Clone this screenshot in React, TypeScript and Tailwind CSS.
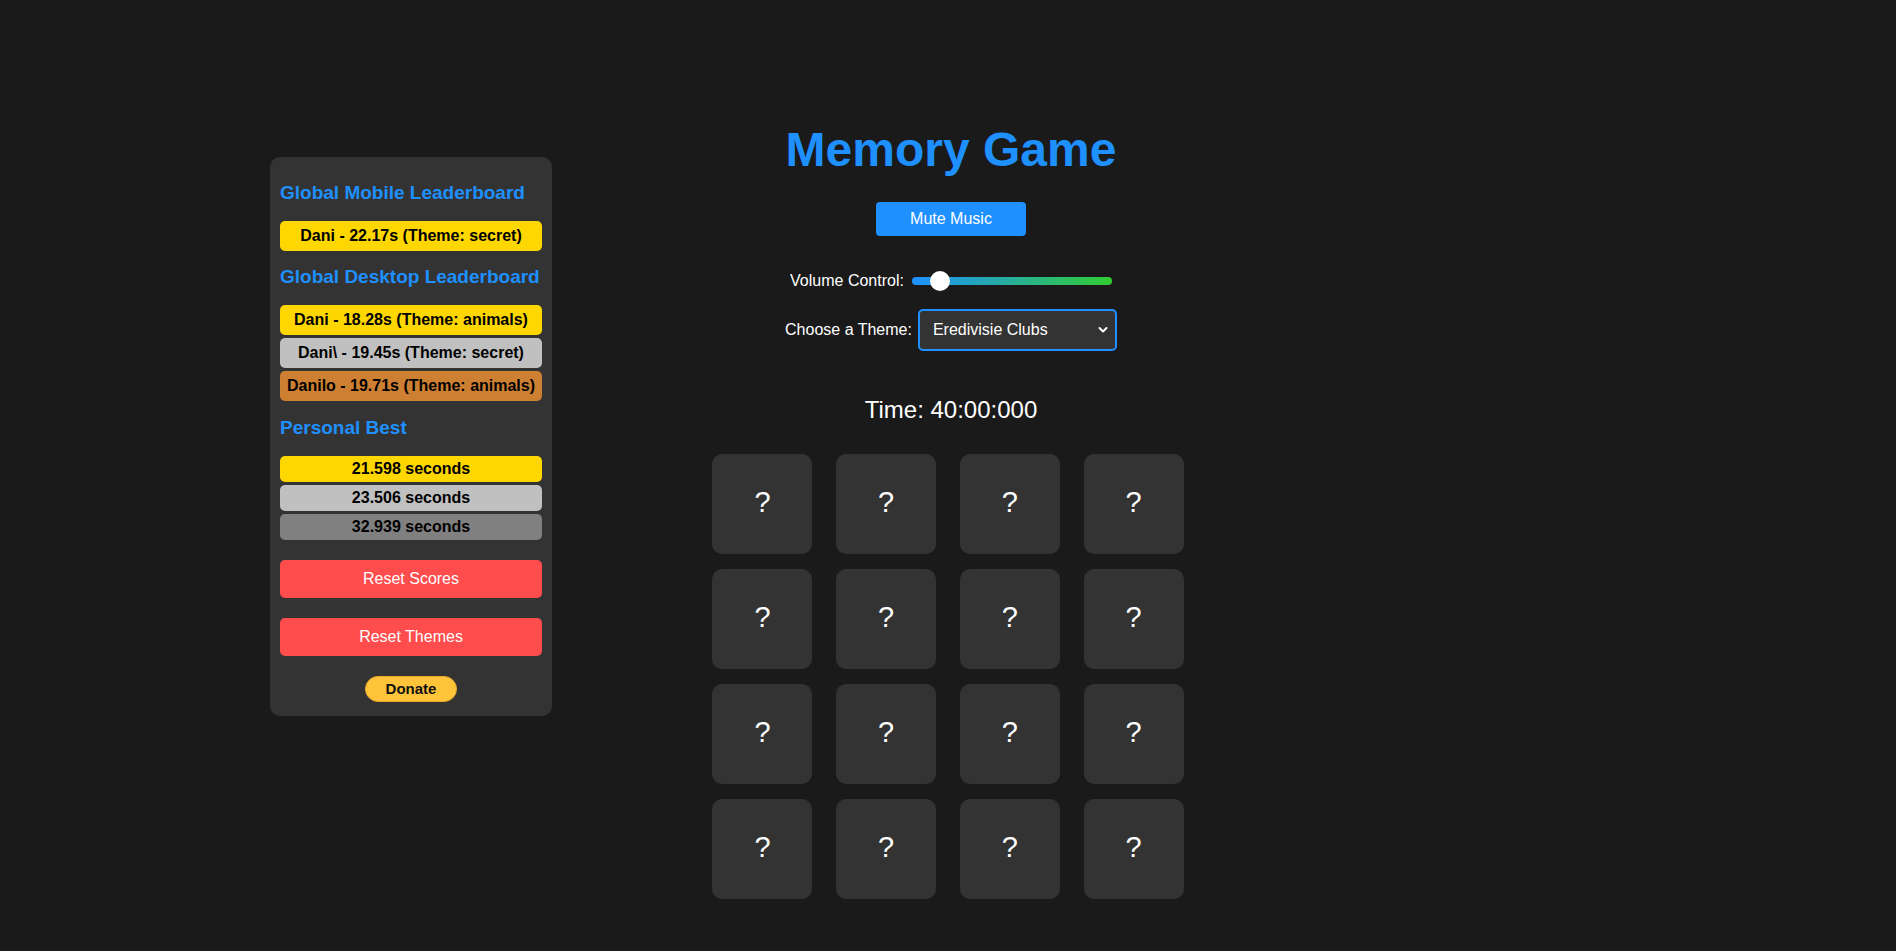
import React from 'react';

const mobileBoard = [{ name: 'Dani', time: '22.17', theme: 'secret' }];

const desktopBoard = [
  { name: 'Dani', time: '18.28', theme: 'animals' },
  { name: 'Dani\\', time: '19.45', theme: 'secret' },
  { name: 'Danilo', time: '19.71', theme: 'animals' }
];

const personalBest = ['21.598', '23.506', '32.939'];

const medal = ['bg-[#ffd700]', 'bg-[#c0c0c0]', 'bg-[#cd7f32]'];
const pbColors = ['bg-[#ffd700]', 'bg-[#c0c0c0]', 'bg-[#808080]'];

function Heading({ children }: { children: React.ReactNode }) {
  return (
    <h3 className="mt-[15px] mb-[17px] whitespace-nowrap text-[19px] font-bold leading-[22px] text-[#1e90ff]">
      {children}
    </h3>
  );
}

function Sidebar() {
  return (
    <aside className="mt-[157px] w-[282px] rounded-[10px] bg-[#333333] px-[10px] pt-[10px] pb-[14px]">
      <Heading>Global Mobile Leaderboard</Heading>
      <div className="flex flex-col gap-[3px]">
        {mobileBoard.map((e, i) => (
          <div
            key={i}
            className={`${medal[i]} rounded-[5px] py-[6px] text-center text-[16px] font-bold leading-[18px] text-black`}
          >
            {e.name} - {e.time}s (Theme: {e.theme})
          </div>
        ))}
      </div>

      <Heading>Global Desktop Leaderboard</Heading>
      <div className="flex flex-col gap-[3px]">
        {desktopBoard.map((e, i) => (
          <div
            key={i}
            className={`${medal[i]} rounded-[5px] py-[6px] text-center text-[16px] font-bold leading-[18px] text-black`}
          >
            {e.name} - {e.time}s (Theme: {e.theme})
          </div>
        ))}
      </div>

      <div className="pt-[1px]">
        <Heading>Personal Best</Heading>
      </div>
      <div className="flex flex-col gap-[3px]">
        {personalBest.map((t, i) => (
          <div
            key={t}
            className={`${pbColors[i]} rounded-[5px] py-[4px] text-center text-[16px] font-bold leading-[18px] text-black`}
          >
            {t} seconds
          </div>
        ))}
      </div>

      <button className="mt-[20px] h-[38px] w-full rounded-[5px] bg-[#ff4c4c] text-[16px] text-white">
        Reset Scores
      </button>
      <button className="mt-[20px] h-[38px] w-full rounded-[5px] bg-[#ff4c4c] text-[16px] text-white">
        Reset Themes
      </button>

      <div className="mt-[20px] flex justify-center">
        <button className="flex h-[26px] w-[92px] items-center justify-center rounded-full border border-[#e8a92a] bg-[#ffc439] text-[15px] font-bold text-[#111111]">
          Donate
        </button>
      </div>
    </aside>
  );
}

function Card() {
  return (
    <div className="flex h-[100px] w-[100px] items-center justify-center rounded-[10px] bg-[#333333] pb-[2px] text-[29px] text-white">
      ?
    </div>
  );
}

export default function App() {
  return (
    <div
      className="grid min-h-screen grid-cols-[1fr_500px_1fr] items-start bg-[#1a1a1a] text-white"
      style={{ fontFamily: '"Liberation Sans", Arial, sans-serif' }}
    >
      <div className="pl-[270px]">
        <Sidebar />
      </div>

      <main className="flex flex-col items-center pt-[122px] pl-[6px]">
        <h1 className="text-[48px] font-bold leading-[55px] text-[#1e90ff]">Memory Game</h1>

        <button className="mt-[25px] h-[34px] w-[150px] rounded-[4px] bg-[#1e90ff] text-[16px] text-white">
          Mute Music
        </button>

        <div className="mt-[33px] flex h-[24px] items-center gap-[8px] text-[16px]">
          <label>Volume Control:</label>
          <input
            type="range"
            min={0}
            max={1}
            step={0.01}
            defaultValue={0.1}
            className="h-[8px] w-[200px] cursor-pointer appearance-none rounded-full bg-[linear-gradient(to_right,#1e90ff,#32cd32)] outline-none [&::-webkit-slider-thumb]:h-[20px] [&::-webkit-slider-thumb]:w-[20px] [&::-webkit-slider-thumb]:appearance-none [&::-webkit-slider-thumb]:rounded-full [&::-webkit-slider-thumb]:bg-white"
          />
        </div>

        <div className="mt-[16px] flex items-center gap-[6px] text-[16px]">
          <label>Choose a Theme:</label>
          <div className="relative">
            <select
              defaultValue="eredivisie"
              className="h-[42px] w-[199px] appearance-none rounded-[5px] border-2 border-[#1e90ff] bg-[#333333] pl-[13px] text-[16px] text-white outline-none"
            >
              <option value="animals">Animals</option>
              <option value="eredivisie">Eredivisie Clubs</option>
              <option value="secret">Secret</option>
            </select>
            <svg
              className="pointer-events-none absolute top-[17px] right-[9px]"
              width="10"
              height="8"
              viewBox="0 0 10 8"
              fill="none"
            >
              <path d="M1.5 2 L5 5.5 L8.5 2" stroke="white" strokeWidth="2" strokeLinecap="round" strokeLinejoin="round" />
            </svg>
          </div>
        </div>

        <div className="mt-[45px] text-[24px] leading-[28px]">Time: 40:00:000</div>

        <div className="mt-[30px] mr-[6px] grid grid-cols-[repeat(4,100px)] gap-x-[23.7px] gap-y-[15px]">
          {Array.from({ length: 16 }).map((_, i) => (
            <Card key={i} />
          ))}
        </div>
      </main>

      <div />
    </div>
  );
}
